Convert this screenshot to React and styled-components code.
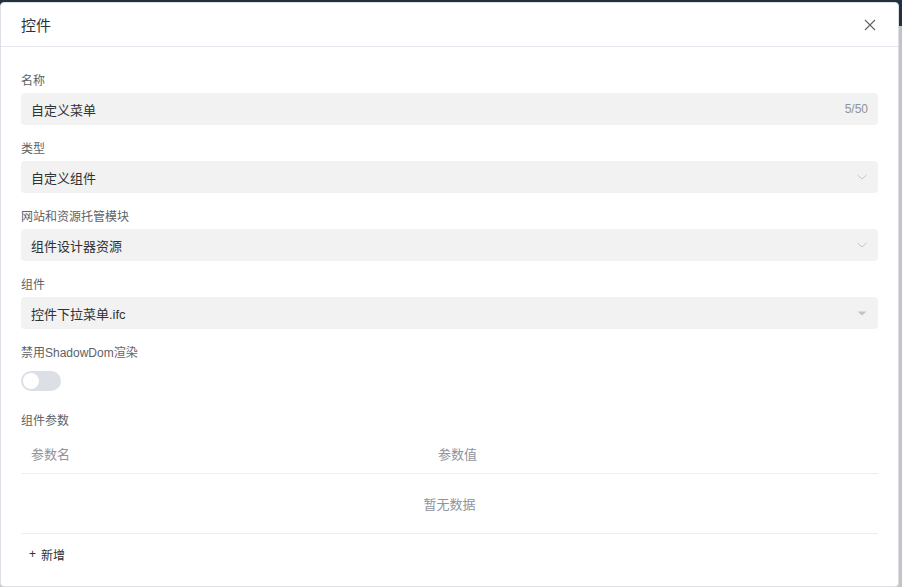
import React, { useState } from 'react';
import styled, { createGlobalStyle } from 'styled-components';

const GlobalStyle = createGlobalStyle`
  html, body {
    margin: 0;
    height: 100%;
    overflow: hidden;
  }
  body {
    background: linear-gradient(to bottom, #22303f 0, #22303f 26px, #c4c4c4 26px);
    font-family: "Liberation Sans", "Noto Sans CJK SC", sans-serif;
  }
`;

const Backdrop = styled.div`
  padding: 2px 3px 0 0;
  height: 100vh;
  box-sizing: border-box;
`;

const Modal = styled.div`
  background: #fff;
  border: 1px solid #dcdfe6;
  border-radius: 4px;
  height: 100%;
  box-sizing: border-box;
  overflow: hidden;
`;

const Header = styled.div`
  height: 43px;
  display: flex;
  align-items: center;
  justify-content: space-between;
  padding: 0 20px;
  border-bottom: 1px solid #e4e7ed;
`;

const Title = styled.span`
  font-size: 15px;
  color: #303133;
`;

const CloseButton = styled.button`
  border: 0;
  background: none;
  padding: 0;
  width: 14px;
  height: 14px;
  display: flex;
  align-items: center;
  justify-content: center;
  cursor: pointer;
  margin-right: 1px;
`;

const Body = styled.div`
  padding: 24px 20px 0 20px;
`;

const Field = styled.div`
  margin-bottom: 14px;
`;

const Label = styled.div`
  font-size: 12px;
  line-height: 20px;
  color: #606266;
  margin-bottom: ${p => p.$gap || '2px'};
`;

const InputBox = styled.div`
  height: 32px;
  background: #f2f2f2;
  border-radius: 4px;
  display: flex;
  align-items: center;
  padding: 0 10px;
  font-size: 13px;
  color: #303133;
`;

const Value = styled.span`
  flex: 1;
`;

const Counter = styled.span`
  font-size: 12px;
  color: #909399;
`;

const SwitchRow = styled.div`
  height: 32px;
  display: flex;
  align-items: center;
`;

const Switch = styled.button`
  width: 40px;
  height: 20px;
  border-radius: 10px;
  border: 0;
  padding: 0;
  background: ${p => (p.$on ? '#409eff' : '#dcdfe6')};
  position: relative;
  cursor: pointer;

  &::after {
    content: '';
    position: absolute;
    top: 2px;
    left: ${p => (p.$on ? '22px' : '2px')};
    width: 16px;
    height: 16px;
    border-radius: 50%;
    background: #fff;
    transition: left 0.2s;
  }
`;

const Table = styled.div`
  font-size: 13px;
`;

const HeadRow = styled.div`
  display: grid;
  grid-template-columns: 407px 1fr;
  height: 39px;
  align-items: center;
  border-bottom: 1px solid #ebeef5;
  color: #909399;
`;

const HeadCell = styled.div`
  padding-left: 10px;
`;

const EmptyRow = styled.div`
  height: 59px;
  display: flex;
  align-items: center;
  justify-content: center;
  color: #909399;
  border-bottom: 1px solid #ebeef5;
`;

const AddButton = styled.button`
  margin-top: 8px;
  border: 0;
  background: none;
  padding: 0 8px;
  height: 24px;
  display: flex;
  align-items: center;
  gap: 5px;
  font-family: inherit;
  font-size: 12px;
  color: #303133;
  cursor: pointer;
`;

const Chevron = () => (
  <svg width="12" height="12" viewBox="0 0 12 12">
    <path d="M1.5 4 L6 8 L10.5 4" fill="none" stroke="#c0c4cc" strokeWidth="1" />
  </svg>
);

const Caret = () => (
  <svg width="12" height="12" viewBox="0 0 12 12">
    <path d="M1.5 4.5 L10.5 4.5 L6 8.5 Z" fill="#c0c4cc" />
  </svg>
);

const SelectField = ({ label, value, icon }) => (
  <Field>
    <Label>{label}</Label>
    <InputBox>
      <Value>{value}</Value>
      {icon}
    </InputBox>
  </Field>
);

export default function App() {
  const [shadow, setShadow] = useState(false);

  return (
    <>
      <GlobalStyle />
      <Backdrop>
        <Modal>
          <Header>
            <Title>控件</Title>
            <CloseButton aria-label="close">
              <svg width="12" height="12" viewBox="0 0 12 12">
                <path d="M1 1 L11 11 M11 1 L1 11" stroke="#606266" strokeWidth="1.1" />
              </svg>
            </CloseButton>
          </Header>
          <Body>
            <Field>
              <Label>名称</Label>
              <InputBox>
                <Value>自定义菜单</Value>
                <Counter>5/50</Counter>
              </InputBox>
            </Field>
            <SelectField label="类型" value="自定义组件" icon={<Chevron />} />
            <SelectField label="网站和资源托管模块" value="组件设计器资源" icon={<Chevron />} />
            <SelectField label="组件" value="控件下拉菜单.ifc" icon={<Caret />} />
            <Field>
              <Label>禁用ShadowDom渲染</Label>
              <SwitchRow>
                <Switch $on={shadow} onClick={() => setShadow(!shadow)} />
              </SwitchRow>
            </Field>
            <Field>
              <Label $gap="3px">组件参数</Label>
              <Table>
                <HeadRow>
                  <HeadCell>参数名</HeadCell>
                  <HeadCell>参数值</HeadCell>
                </HeadRow>
                <EmptyRow>暂无数据</EmptyRow>
              </Table>
              <AddButton>
                <span>+</span>
                <span>新增</span>
              </AddButton>
            </Field>
          </Body>
        </Modal>
      </Backdrop>
    </>
  );
}
